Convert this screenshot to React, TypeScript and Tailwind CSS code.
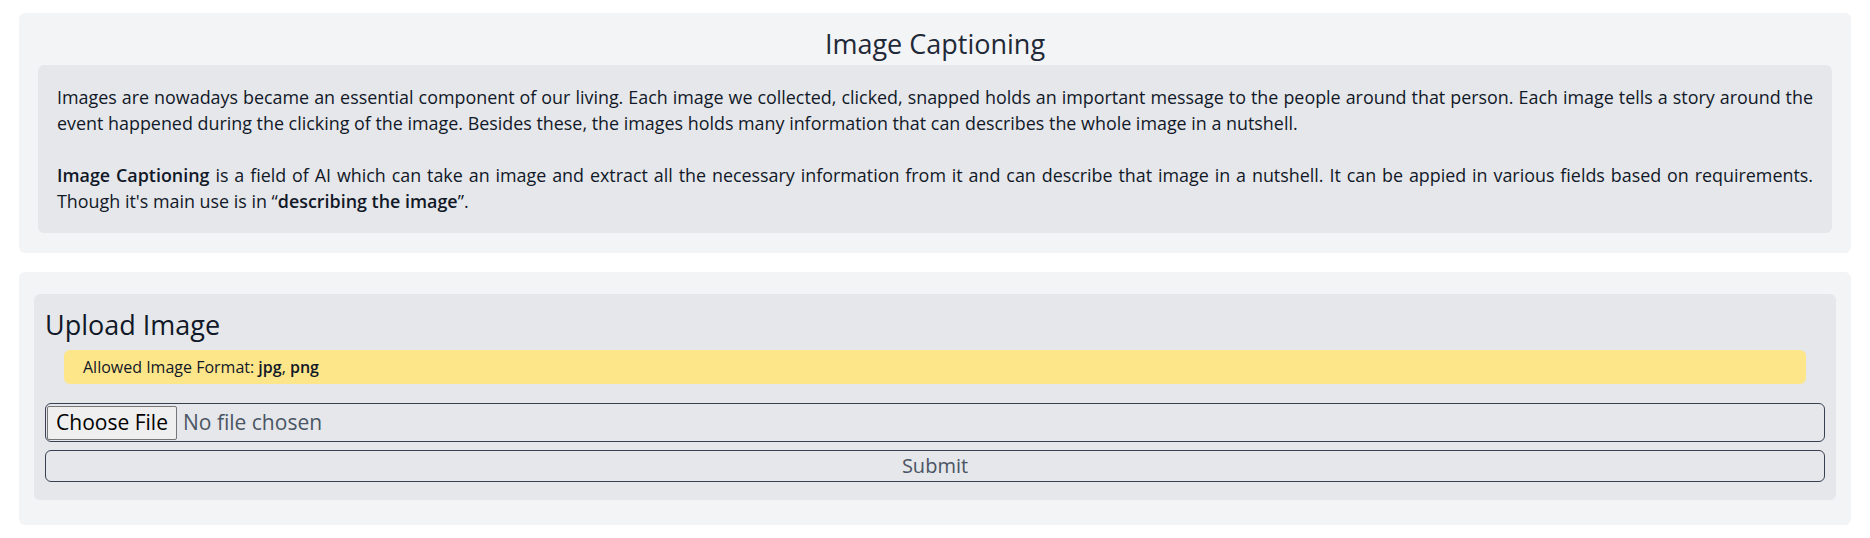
import { useState } from 'react';

const font = { fontFamily: '"Open Sans", "Noto Sans", sans-serif' };

function IntroPanel() {
  return (
    <section className="rounded-[6px] bg-[#f3f4f6] px-[19px] pt-[11px] pb-[20px]">
      <h1 className="text-center text-[27px] leading-[40px] font-normal text-[#1f2937]">Image Captioning</h1>
      <div className="mt-[1px] rounded-[6px] bg-[#e5e7eb] px-[19px] py-[19px] text-justify text-[17.9px] leading-[26px] text-[#111827]">
        <p>
          Images are nowadays became an essential component of our living. Each image we collected, clicked, snapped
          holds an important message to the people around that person. Each image tells a story around the event
          happened during the clicking of the image. Besides these, the images holds many information that can
          describes the whole image in a nutshell.
        </p>
        <p className="mt-[26px]">
          <b className="font-semibold">Image Captioning</b> is a field of AI which can take an image and extract all
          the necessary information from it and can describe that image in a nutshell. It can be appied in various
          fields based on requirements. Though it's main use is in “<b className="font-semibold">describing the image</b>”.
        </p>
      </div>
    </section>
  );
}

function UploadPanel() {
  const [fileName, setFileName] = useState<string | null>(null);

  return (
    <section className="rounded-[6px] bg-[#f3f4f6] px-[15px] pt-[22px] pb-[25px]">
      <form
        className="rounded-[6px] bg-[#e5e7eb] px-[11px] pt-[11px] pb-[18px]"
        onSubmit={e => e.preventDefault()}
      >
        <h2 className="text-[27px] leading-[40px] font-normal text-[#111827]">Upload Image</h2>
        <div className="mx-[19px] mt-[5px] flex h-[34px] items-center rounded-[6px] bg-[#fde68a] px-[19px] text-[16px] text-[#111827]">
          <span>
            Allowed Image Format: <b className="font-semibold">jpg</b>, <b className="font-semibold">png</b>
          </span>
        </div>
        <label className="mt-[19px] flex h-[39px] cursor-pointer items-center rounded-[6px] border border-[#374151] pl-px text-[21px]">
          <input
            type="file"
            accept=".jpg,.png"
            className="hidden"
            onChange={e => setFileName(e.target.files?.[0]?.name ?? null)}
          />
          <span className="flex h-[34px] w-[130px] items-center justify-center rounded-[2px] border border-[#767676] bg-[#efefef] text-black">
            Choose File
          </span>
          <span className="ml-[6px] text-[#4b5563]">{fileName ?? 'No file chosen'}</span>
        </label>
        <button
          type="submit"
          className="mt-[8px] block h-[32px] w-full rounded-[6px] border border-[#374151] text-center text-[20px] leading-[30px] text-[#4b5563]"
        >
          Submit
        </button>
      </form>
    </section>
  );
}

export default function App() {
  return (
    <div className="flex flex-col gap-[19px] bg-white px-[19px] pt-[13px] pb-[13px]" style={font}>
      <IntroPanel />
      <UploadPanel />
    </div>
  );
}
